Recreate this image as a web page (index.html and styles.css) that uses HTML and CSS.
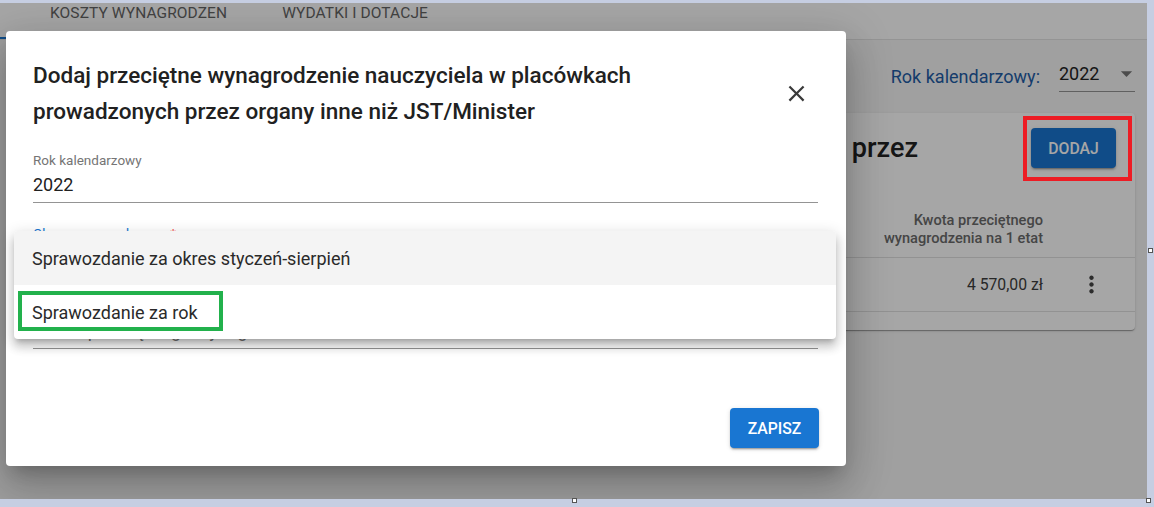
FILE: index.html
```html
<!DOCTYPE html>
<html lang="pl">
<head>
  <meta charset="UTF-8" />
  <title>Przeciętne wynagrodzenie nauczyciela</title>
  <link rel="stylesheet" href="styles.css">
</head>
<body>

  <div class="frame">
    <div class="app">
      <nav class="tabs">
        <span class="tab">KOSZTY WYNAGRODZEN</span>
        <span class="tab">WYDATKI I DOTACJE</span>
      </nav>

      <main class="content">
        <div class="filter">
          <span class="filter-label">Rok kalendarzowy:</span>
          <div class="select">
            <span>2022</span>
            <svg class="select-arrow" viewBox="0 0 24 24"><path d="M7 10l5 5 5-5z"/></svg>
          </div>
        </div>

        <section class="card">
          <div class="card-head">
            <div class="card-title"><h2>Przeciętne wynagrodzenie nauczyciela w placówkach prowadzonych przez</h2></div>
            <button class="btn">DODAJ</button>
          </div>

          <div class="table">
            <div class="row head">
              <div class="cell">Rok</div>
              <div class="cell">Okres sprawozdawczy</div>
              <div class="cell num">Kwota przeciętnego<br>wynagrodzenia na 1 etat</div>
              <div class="cell"></div>
            </div>
            <div class="row">
              <div class="cell">2022</div>
              <div class="cell">Sprawozdanie za rok</div>
              <div class="cell num">4 570,00 zł</div>
              <div class="cell act">
                <svg class="kebab" viewBox="0 0 24 24"><path d="M12 8c1.1 0 2-.9 2-2s-.9-2-2-2-2 .9-2 2 .9 2 2 2zm0 2c-1.1 0-2 .9-2 2s.9 2 2 2 2-.9 2-2-.9-2-2-2zm0 6c-1.1 0-2 .9-2 2s.9 2 2 2 2-.9 2-2-.9-2-2-2z"/></svg>
              </div>
            </div>
          </div>
        </section>
      </main>
    </div>

    <div class="backdrop"></div>

    <div class="dialog">
      <div class="dialog-title">
        <h2>Dodaj przeciętne wynagrodzenie nauczyciela w placówkach prowadzonych przez organy inne niż JST/Minister</h2>
        <button class="close">
          <svg viewBox="0 0 24 24"><path d="M19 6.41 17.59 5 12 10.59 6.41 5 5 6.41 10.59 12 5 17.59 6.41 19 12 13.41 17.59 19 19 17.59 13.41 12z"/></svg>
        </button>
      </div>

      <div class="field">
        <label>Rok kalendarzowy</label>
        <div class="value">2022</div>
      </div>

      <div class="field focused">
        <label>Okres sprawozdawczy <span class="req">*</span></label>
        <div class="value"></div>

        <ul class="menu">
          <li class="selected">Sprawozdanie za okres styczeń-sierpień</li>
          <li>Sprawozdanie za rok <span class="mark mark-green"></span></li>
        </ul>
      </div>

      <div class="field">
        <label>Kwota przeciętnego wynagrodzenia <span class="req">*</span></label>
        <div class="value placeholder">Kwota przeciętnego wynagrodzenia</div>
      </div>

      <div class="dialog-actions">
        <button class="btn">ZAPISZ</button>
      </div>
    </div>

    <span class="mark mark-red"></span>
  </div>

  <span class="handle handle-bottom"></span>
  <span class="handle handle-corner"></span>
  <span class="handle handle-right"></span>

</body>
</html>
```

FILE: styles.css
```css
body {
  margin: 0;
  background: #c6cee2;
  font-family: Roboto, 'Liberation Sans', sans-serif;
  position: relative;
  height: 507px;
  overflow: hidden;
}

.frame {
  position: relative;
  margin-top: 3px;
  width: 1147px;
  height: 496px;
  overflow: hidden;
  background: #f6f6f6;
}

/* page under the dialog */

.tabs {
  position: relative;
  display: flex;
  gap: 55px;
  height: 36px;
  padding-left: 50px;
  background: #fff;
  border-bottom: 1px solid #e4e4e4;
}

.tabs::before {
  content: '';
  position: absolute;
  left: 0;
  bottom: 0;
  width: 30px;
  height: 2px;
  background: #1976d2;
}

.tab {
  font-size: 15.5px;
  font-weight: 400;
  line-height: 20px;
  color: #666;
  letter-spacing: 0.1px;
}

.content {
  padding: 20px 12px 0 16px;
}

.filter {
  display: flex;
  justify-content: flex-end;
  align-items: center;
  gap: 19px;
  margin-bottom: 21px;
}

.filter-label {
  font-size: 18px;
  color: #1f5da6;
}

.select {
  display: flex;
  justify-content: space-between;
  align-items: center;
  width: 76px;
  font-size: 18px;
  line-height: 27px;
  color: #222;
  padding-bottom: 4px;
  border-bottom: 1px solid #949494;
}

.select-arrow {
  width: 27px;
  height: 27px;
  margin-right: -5px;
  fill: #757575;
}

.card {
  background: #fff;
  border-radius: 4px;
  box-shadow: 0 2px 1px -1px rgba(0,0,0,0.2), 0 1px 1px rgba(0,0,0,0.14), 0 1px 3px rgba(0,0,0,0.12);
  padding-bottom: 18px;
}

.card-head {
  display: flex;
  align-items: center;
  padding: 15px 19px 15px 24px;
}

.card-title {
  flex: 1;
  display: flex;
  justify-content: flex-end;
  overflow: hidden;
  margin-right: 113px;
}

.card-title h2 {
  margin: 0;
  font-size: 27px;
  font-weight: 500;
  color: #222;
  white-space: nowrap;
}

.btn {
  font-family: inherit;
  font-size: 15.75px;
  font-weight: 500;
  letter-spacing: 0;
  color: #fff;
  background: #1976d2;
  border: none;
  border-radius: 4px;
  height: 40px;
  cursor: pointer;
  box-shadow: 0 3px 1px -2px rgba(0,0,0,0.2), 0 2px 2px rgba(0,0,0,0.14), 0 1px 5px rgba(0,0,0,0.12);
}

.card-head .btn {
  width: 85px;
}

.table {
  margin-top: 6px;
}

.row {
  display: grid;
  grid-template-columns: 1fr 1.4fr 260px 76px;
  align-items: center;
  border-bottom: 1px solid #e0e0e0;
  font-size: 15.75px;
  line-height: 21px;
  color: #3d3d3d;
}

.row .cell {
  padding: 16px;
}

.row.head {
  align-items: end;
  font-size: 14.6px;
  font-weight: 500;
  line-height: 18px;
  color: #6b6b6b;
}

.row.head .cell {
  padding: 22px 16px 10px;
}

.cell.num {
  text-align: right;
}

.row .cell.act {
  padding: 0 0 0 19px;
  display: flex;
}

.kebab {
  width: 27px;
  height: 27px;
  fill: #444;
}

.backdrop {
  position: absolute;
  inset: 0;
  background: rgba(0, 0, 0, 0.35);
}

/* dialog */

.dialog {
  position: absolute;
  left: 6px;
  top: 28px;
  width: 840px;
  box-sizing: border-box;
  padding: 26px 28px 18px 27px;
  background: #fff;
  border-radius: 4px;
  box-shadow: 0 11px 15px -7px rgba(0,0,0,0.2), 0 24px 38px 3px rgba(0,0,0,0.14), 0 9px 46px 8px rgba(0,0,0,0.12);
}

.dialog-title {
  display: flex;
  justify-content: space-between;
  align-items: center;
}

.dialog-title h2 {
  margin: 0;
  max-width: 690px;
  font-size: 22.5px;
  font-weight: 500;
  line-height: 36px;
  color: #212121;
}

.close {
  width: 44px;
  height: 44px;
  padding: 0;
  border: none;
  background: none;
  display: flex;
  align-items: center;
  justify-content: center;
  cursor: pointer;
}

.close svg {
  width: 27px;
  height: 27px;
  fill: #3a3a3a;
}

.field {
  position: relative;
  margin-top: 22px;
  border-bottom: 1px solid #949494;
  padding-bottom: 4px;
}

.dialog-title + .field {
  margin-top: 23px;
}

.field label {
  display: block;
  font-size: 13.5px;
  line-height: 16px;
  color: #757575;
  margin-bottom: 3px;
}

.field .value {
  font-size: 18px;
  line-height: 27px;
  height: 27px;
  color: #212121;
}

.field .value.placeholder {
  color: #777;
}

.field.focused label {
  color: #1976d2;
}

.req {
  color: #f44336;
}

.menu {
  position: absolute;
  top: 6px;
  left: -19px;
  width: 822px;
  margin: 0;
  padding: 0;
  list-style: none;
  background: #fff;
  border-radius: 4px;
  box-shadow: 0 5px 5px -3px rgba(0,0,0,0.2), 0 8px 10px 1px rgba(0,0,0,0.14), 0 3px 14px 2px rgba(0,0,0,0.12);
  z-index: 2;
}

.menu li {
  position: relative;
  padding: 13.5px 18px;
  font-size: 18px;
  line-height: 27px;
  color: #2a2a2a;
}

.menu li.selected {
  background: #f4f4f4;
  border-radius: 4px 4px 0 0;
}

.dialog-actions {
  display: flex;
  justify-content: flex-end;
  margin: 59px -1px 0 0;
}

.dialog-actions .btn {
  width: 89px;
}

/* annotation frames */

.mark {
  position: absolute;
  box-sizing: border-box;
  border: 4px solid;
}

.mark-green {
  left: 4px;
  top: 6px;
  width: 205px;
  height: 40px;
  border-color: #22b14c;
}

.mark-red {
  left: 1023px;
  top: 113px;
  width: 109px;
  height: 65px;
  border-color: #ed1c24;
}

.handle {
  position: absolute;
  width: 5px;
  height: 5px;
  box-sizing: border-box;
  background: #fff;
  border: 1px solid #555;
}

.handle-bottom { left: 572px; top: 498px; }
.handle-corner { left: 1146px; top: 498px; }
.handle-right { left: 1148px; top: 248px; }
```
